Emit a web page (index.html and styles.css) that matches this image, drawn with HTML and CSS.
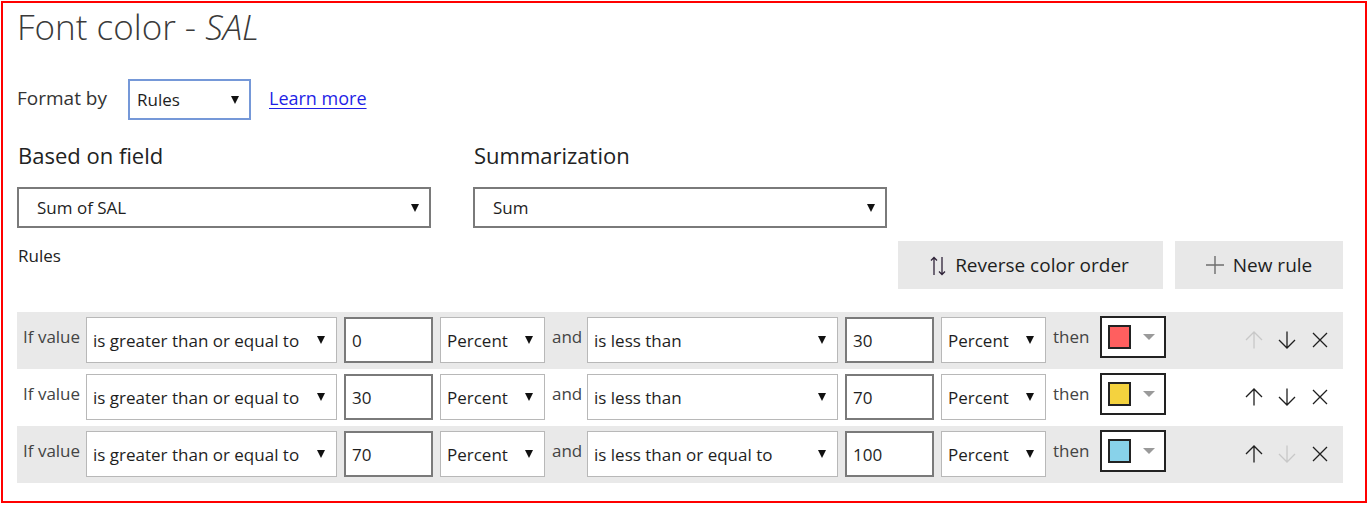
FILE: index.html
```html
<!DOCTYPE html>
<html lang="en">
<head>
<meta charset="utf-8">
<title>Font color - SAL</title>
<link rel="stylesheet" href="styles.css">
</head>
<body>
<div class="frame">
  <h1 class="title">Font color - <em>SAL</em></h1>

  <div class="format-row">
    <span class="format-label">Format by</span>
    <div class="select select-format"><span>Rules</span><i class="caret"></i></div>
    <a class="learn" href="#">Learn more</a>
  </div>

  <div class="fields">
    <div class="field">
      <div class="field-label">Based on field</div>
      <div class="select select-field"><span>Sum of SAL</span><i class="caret"></i></div>
    </div>
    <div class="field">
      <div class="field-label">Summarization</div>
      <div class="select select-field"><span>Sum</span><i class="caret"></i></div>
    </div>
  </div>

  <div class="rules-head">
    <div class="rules-label">Rules</div>
    <div class="actions">
      <button class="btn btn-reverse">
        <svg class="ico-reverse" width="16" height="20" viewBox="0 0 16 20"><path d="M4 19V1.5M1 4.5L4 1.5L7 4.5M12 1v17.5M9 15.5L12 18.5L15 15.5" fill="none" stroke="#2e2238" stroke-width="1.3"/></svg>
        <span>Reverse color order</span>
      </button>
      <button class="btn btn-new">
        <svg class="ico-plus" width="18" height="18" viewBox="0 0 18 18"><path d="M9 0v18M0 9h18" fill="none" stroke="#6e6e6e" stroke-width="1.4"/></svg>
        <span>New rule</span>
      </button>
    </div>
  </div>

  <div class="rules">
    <div class="rule rule-shaded">
      <span class="rule-text rule-if">If value</span>
      <div class="select select-cond"><span>is greater than or equal to</span><i class="caret"></i></div>
      <div class="num">0</div>
      <div class="select select-unit"><span>Percent</span><i class="caret"></i></div>
      <span class="rule-text rule-and">and</span>
      <div class="select select-cond"><span>is less than</span><i class="caret"></i></div>
      <div class="num">30</div>
      <div class="select select-unit"><span>Percent</span><i class="caret"></i></div>
      <span class="rule-text rule-then">then</span>
      <div class="picker"><span class="swatch swatch-red"></span><i class="picker-caret"></i></div>
      <div class="row-tools">
        <span class="tool tool-off"><svg width="18" height="18" viewBox="0 0 18 18"><path d="M9 17.5V1M1 9L9 1L17 9" fill="none" stroke="currentColor" stroke-width="1.3"/></svg></span>
        <span class="tool"><svg width="18" height="18" viewBox="0 0 18 18"><path d="M9 0.5V17M1 9L9 17L17 9" fill="none" stroke="currentColor" stroke-width="1.3"/></svg></span>
        <span class="tool"><svg width="16" height="16" viewBox="0 0 16 16"><path d="M1 1L15 15M15 1L1 15" fill="none" stroke="currentColor" stroke-width="1.3"/></svg></span>
      </div>
    </div>

    <div class="rule">
      <span class="rule-text rule-if">If value</span>
      <div class="select select-cond"><span>is greater than or equal to</span><i class="caret"></i></div>
      <div class="num">30</div>
      <div class="select select-unit"><span>Percent</span><i class="caret"></i></div>
      <span class="rule-text rule-and">and</span>
      <div class="select select-cond"><span>is less than</span><i class="caret"></i></div>
      <div class="num">70</div>
      <div class="select select-unit"><span>Percent</span><i class="caret"></i></div>
      <span class="rule-text rule-then">then</span>
      <div class="picker"><span class="swatch swatch-yellow"></span><i class="picker-caret"></i></div>
      <div class="row-tools">
        <span class="tool"><svg width="18" height="18" viewBox="0 0 18 18"><path d="M9 17.5V1M1 9L9 1L17 9" fill="none" stroke="currentColor" stroke-width="1.3"/></svg></span>
        <span class="tool"><svg width="18" height="18" viewBox="0 0 18 18"><path d="M9 0.5V17M1 9L9 17L17 9" fill="none" stroke="currentColor" stroke-width="1.3"/></svg></span>
        <span class="tool"><svg width="16" height="16" viewBox="0 0 16 16"><path d="M1 1L15 15M15 1L1 15" fill="none" stroke="currentColor" stroke-width="1.3"/></svg></span>
      </div>
    </div>

    <div class="rule rule-shaded">
      <span class="rule-text rule-if">If value</span>
      <div class="select select-cond"><span>is greater than or equal to</span><i class="caret"></i></div>
      <div class="num">70</div>
      <div class="select select-unit"><span>Percent</span><i class="caret"></i></div>
      <span class="rule-text rule-and">and</span>
      <div class="select select-cond"><span>is less than or equal to</span><i class="caret"></i></div>
      <div class="num">100</div>
      <div class="select select-unit"><span>Percent</span><i class="caret"></i></div>
      <span class="rule-text rule-then">then</span>
      <div class="picker"><span class="swatch swatch-blue"></span><i class="picker-caret"></i></div>
      <div class="row-tools">
        <span class="tool"><svg width="18" height="18" viewBox="0 0 18 18"><path d="M9 17.5V1M1 9L9 1L17 9" fill="none" stroke="currentColor" stroke-width="1.3"/></svg></span>
        <span class="tool tool-off"><svg width="18" height="18" viewBox="0 0 18 18"><path d="M9 0.5V17M1 9L9 17L17 9" fill="none" stroke="currentColor" stroke-width="1.3"/></svg></span>
        <span class="tool"><svg width="16" height="16" viewBox="0 0 16 16"><path d="M1 1L15 15M15 1L1 15" fill="none" stroke="currentColor" stroke-width="1.3"/></svg></span>
      </div>
    </div>
  </div>
</div>
</body>
</html>
```

FILE: styles.css
```css
* { box-sizing: border-box; }

html, body {
  margin: 0;
  padding: 0;
  background: #ffffff;
}

body {
  padding: 1px 0 0 1px;
  font-family: "Open Sans", "Noto Sans", "Liberation Sans", sans-serif;
  color: #333333;
}

.frame {
  width: 1366px;
  height: 502px;
  border: 2px solid #ff0000;
  padding: 0 22px 0 14px;
}

/* Title */
.title {
  margin: 2px 0 0 0;
  font-size: 35px;
  line-height: 44px;
  font-weight: 300;
  color: #3a3a3a;
  letter-spacing: 0;
}
.title em {
  font-style: italic;
}

/* Format row */
.format-row {
  margin-top: 30px;
  height: 41px;
  display: flex;
  align-items: center;
}
.format-label {
  width: 111px;
  font-size: 19px;
  line-height: 24px;
  color: #333333;
  margin-bottom: 4px;
}
.learn {
  margin-left: 18px;
  font-size: 18px;
  line-height: 24px;
  color: #1f1fe6;
  text-decoration: underline;
  text-underline-offset: 3px;
  margin-bottom: 3px;
}

/* Generic select */
.select {
  position: relative;
  display: flex;
  align-items: center;
  background: #ffffff;
  font-size: 17px;
  color: #1e1e1e;
  white-space: nowrap;
}
.caret {
  position: absolute;
  top: 50%;
  width: 0;
  height: 0;
  margin-top: -4px;
  border-left: 4px solid transparent;
  border-right: 4px solid transparent;
  border-top: 8px solid #111111;
}

.select-format {
  width: 123px;
  height: 41px;
  border: 2px solid #7598d8;
  padding-left: 7px;
}
.select-format .caret { right: 10px; }

/* Fields */
.fields {
  margin-top: 20px;
  display: flex;
  gap: 42px;
}
.field-label {
  font-size: 22px;
  line-height: 30px;
  color: #222222;
  padding-left: 1px;
}
.select-field {
  margin-top: 17px;
  width: 414px;
  height: 41px;
  border: 2px solid #7a7a7a;
  padding-left: 18px;
}
.select-field .caret { right: 10px; }

/* Rules head */
.rules-head {
  margin-top: 13px;
  height: 48px;
  display: flex;
  justify-content: space-between;
  align-items: flex-start;
}
.rules-label {
  padding-top: 3px;
  padding-left: 1px;
  font-size: 17px;
  line-height: 24px;
  color: #222222;
}
.actions {
  display: flex;
  gap: 12px;
}
.btn {
  height: 48px;
  border: none;
  background: #e8e8e8;
  font-family: inherit;
  font-size: 19px;
  color: #1e1e1e;
  display: flex;
  align-items: center;
  justify-content: center;
  gap: 9px;
  padding: 0;
}
.btn-reverse { width: 265px; padding-right: 2px; }
.btn-new { width: 168px; gap: 9px; }
.ico-reverse { margin-top: 1px; }

/* Rules */
.rules {
  margin-top: 23px;
}
.rule {
  height: 57px;
  display: flex;
  align-items: flex-start;
  gap: 7px;
  padding: 5px 0 0 6px;
}
.rule-shaded {
  background: #e9e9e9;
}
.rule-text {
  margin-top: 8px;
  font-size: 17px;
  line-height: 24px;
  color: #444444;
  white-space: nowrap;
}
.rule-if { width: 56px; }
.rule-and { width: 28px; }
.rule-then { width: 40px; }

.select-cond,
.select-unit {
  height: 46px;
  border: 1px solid #b8b8b8;
  padding-left: 6px;
  padding-top: 1px;
}
.select-cond { width: 251px; }
.select-unit { width: 105px; }
.select-cond .caret,
.select-unit .caret { right: 11px; }

.num {
  width: 89px;
  height: 46px;
  border: 2px solid #7a7a7a;
  background: #ffffff;
  display: flex;
  align-items: center;
  padding: 1px 0 0 6px;
  font-size: 17px;
  color: #1e1e1e;
}

.picker {
  margin-top: -1px;
  width: 66px;
  height: 42px;
  border: 2px solid #222222;
  background: #ffffff;
  display: flex;
  align-items: center;
  padding-left: 6px;
}
.swatch {
  width: 23px;
  height: 24px;
  border: 2px solid #222222;
}
.swatch-red { background: #ff5f5f; }
.swatch-yellow { background: #f4d23e; }
.swatch-blue { background: #88d2ea; }
.picker-caret {
  margin-left: 12px;
  width: 0;
  height: 0;
  border-left: 6px solid transparent;
  border-right: 6px solid transparent;
  border-top: 6px solid #9a9a9a;
}

.row-tools {
  margin-left: auto;
  margin-right: 7px;
  height: 46px;
  display: flex;
  align-items: center;
}
.tool {
  width: 33px;
  display: flex;
  justify-content: center;
  color: #1f1f1f;
}
.tool-off {
  color: #c8c8c8;
}
```
